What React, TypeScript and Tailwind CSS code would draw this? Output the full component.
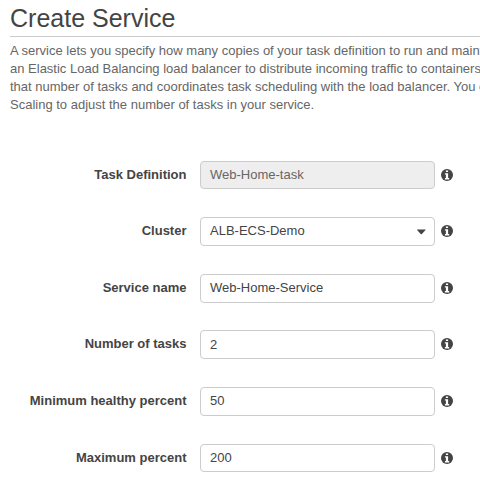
import React from 'react';

type Field = {
  label: string;
  value: string;
  row: string;
  valueLine?: string;
  disabled?: boolean;
  select?: boolean;
};

const fields: Field[] = [
  { label: 'Task Definition', value: 'Web-Home-task', row: 'h-[28px] mb-[28px]', disabled: true },
  { label: 'Cluster', value: 'ALB-ECS-Demo', row: 'h-[29px] mb-[28px]', select: true },
  { label: 'Service name', value: 'Web-Home-Service', row: 'h-[29px] mb-[27px]' },
  { label: 'Number of tasks', value: '2', row: 'h-[29px] mb-[28px]', valueLine: 'pt-px' },
  { label: 'Minimum healthy percent', value: '50', row: 'h-[29px] mb-[28px]' },
  { label: 'Maximum percent', value: '200', row: 'h-[28px]' },
];

function InfoIcon() {
  return (
    <svg className="mt-2 ml-1.5 h-3 w-3 shrink-0" viewBox="0 0 12 12">
      <circle cx="6" cy="6" r="6" fill="#444444" />
      <path
        d="M4.900 1.400h2.200v1.700H4.900zM3.900 4.200h3.200v4.800h1.100v1.400H3.900V9h1V5.500h-1z"
        fill="#ffffff"
      />
    </svg>
  );
}

function FormRow({ label, value, row, valueLine, disabled, select }: Field) {
  return (
    <div className={`flex items-start ${row}`}>
      <label className="w-[186.5px] shrink-0 text-right font-bold leading-[27px]">{label}</label>
      <div
        className={`ml-[13.5px] flex h-full w-[235px] shrink-0 items-start justify-between rounded-[4px] border border-[#cccccc] pr-2 pl-[9px] ${
          disabled ? 'bg-[#eeeeee] text-[#666666]' : 'bg-white'
        }`}
      >
        <span className={`leading-[25px] ${valueLine ?? ''}`}>{value}</span>
        {select && (
          <svg className="mt-[11px] h-[6px] w-[10px]" viewBox="0 0 10 6" fill="#444444">
            <path d="M1.200.400h8.200q.5.200.1.700L5.900 5q-.6.500-1.200 0L1.100 1.100Q.7.600 1.200.400z" />
          </svg>
        )}
      </div>
      <InfoIcon />
    </div>
  );
}

export default function App() {
  return (
    <main className="h-[487px] w-[480px] overflow-hidden bg-white font-['Liberation_Sans',Arial,sans-serif] text-[13px] text-[#444444]">
      <h1 className="ml-[10px] h-[37px] border-b border-[#cccccc] text-[25px] leading-9">Create Service</h1>
      <p className="mt-[5px] ml-[10px] h-[72px] whitespace-nowrap leading-[18px] text-[#666666]">
        A service lets you specify how many copies of your task definition to run and maintain
        <br />
        an Elastic Load Balancing load balancer to distribute incoming traffic to containers in
        <br />
        that number of tasks and coordinates task scheduling with the load balancer. You can
        <br />
        Scaling to adjust the number of tasks in your service.
      </p>
      <form className="mt-[47px]">
        {fields.map((field) => (
          <FormRow key={field.label} {...field} />
        ))}
      </form>
    </main>
  );
}
